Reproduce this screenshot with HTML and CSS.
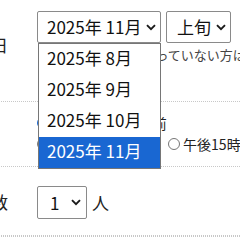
FILE: index.html
```html
<!DOCTYPE html>
<html lang="ja">
<head>
    <meta charset="UTF-8" />
    <meta name="viewport" content="width=device-width, initial-scale=1.0"/>
    <title>ご予約フォーム</title>
    <link rel="stylesheet" href="styles.css">
</head>
<body>
    <div class="form">
        <!-- 希望日 -->
        <div class="row row-date">
            <div class="label label-date">希望日</div>
            <div class="field">
                <div class="select-line">
                    <div class="select-wrap">
                        <div class="select select-month">
                            <span>2025年 11月</span>
                            <svg class="chev" width="10" height="7" viewBox="0 0 10 7"><path d="M1 1.2 L5 5.2 L9 1.2" fill="none" stroke="#1a1a1a" stroke-width="1.9"/></svg>
                        </div>
                        <ul class="dropdown">
                            <li>2025年 8月</li>
                            <li>2025年 9月</li>
                            <li>2025年 10月</li>
                            <li class="active">2025年 11月</li>
                        </ul>
                    </div>
                    <div class="select select-term">
                        <span>上旬</span>
                        <svg class="chev" width="10" height="7" viewBox="0 0 10 7"><path d="M1 1.2 L5 5.2 L9 1.2" fill="none" stroke="#1a1a1a" stroke-width="1.9"/></svg>
                    </div>
                </div>
                <p class="note">※来店日がまだ決まっていない方はお問い合わせください</p>
            </div>
        </div>

        <!-- 時間帯 -->
        <div class="row row-time">
            <div class="label"></div>
            <div class="field">
                <div class="radio-line">
                    <span class="radio checked"></span>
                    <span class="radio-text">ご指定時間より前</span>
                </div>
                <div class="radio-line">
                    <span class="radio"></span>
                    <span class="radio-text gap">午後13時〜15時</span>
                    <span class="radio"></span>
                    <span class="radio-text">午後15時〜17時</span>
                </div>
            </div>
        </div>

        <!-- 人数 -->
        <div class="row row-people">
            <div class="label label-people">人数</div>
            <div class="field field-inline">
                <div class="select select-count">
                    <span>1</span>
                    <svg class="chev" width="10" height="7" viewBox="0 0 10 7"><path d="M1 1.2 L5 5.2 L9 1.2" fill="none" stroke="#1a1a1a" stroke-width="1.9"/></svg>
                </div>
                <span class="unit">人</span>
            </div>
        </div>

        <div class="row"></div>
    </div>
</body>
</html>
```

FILE: styles.css
```css
body {
    margin: 0;
    font-family: "Noto Sans CJK JP", "Noto Sans", sans-serif;
    color: #222;
    background: #fff;
    overflow: hidden;
}

.form {
    margin-left: -60px;
    width: 320px;
}

.row {
    display: flex;
    border-bottom: 1px dotted #c8c8c8;
}

.label {
    flex: 0 0 97px;
    box-sizing: border-box;
    padding-right: 29px;
    text-align: right;
    font-size: 17px;
    line-height: 24px;
    white-space: nowrap;
}

.field {
    flex: 1;
}

/* 希望日 */
.row-date {
    height: 102px;
    box-sizing: border-box;
    padding-top: 11px;
}

.label-date {
    padding-top: 22px;
}

.select-line {
    display: flex;
    gap: 5px;
}

.select-wrap {
    position: relative;
}

.select {
    display: flex;
    align-items: center;
    justify-content: space-between;
    box-sizing: border-box;
    height: 32px;
    border: 1px solid #8a8a8a;
    border-radius: 2px;
    background: #fff;
    font-size: 17px;
    color: #111;
}

.select span {
    padding-bottom: 1px;
}

.select-month {
    width: 124px;
    padding: 0 4px 0 9px;
}

.select-term {
    width: 65px;
    padding: 0 4px 0 10px;
}

.dropdown {
    position: absolute;
    top: 32px;
    left: 1px;
    width: 123px;
    box-sizing: border-box;
    margin: 0;
    padding: 0;
    list-style: none;
    background: #fff;
    border: 1px solid #767676;
    z-index: 10;
}

.dropdown li {
    height: 31px;
    line-height: 27px;
    padding-left: 8px;
    font-size: 17px;
    color: #111;
}

.dropdown li.active {
    background: #1967d2;
    color: #fff;
}

.note {
    margin: 3px 0 0 2px;
    font-size: 13px;
    line-height: 18px;
    color: #444;
    white-space: nowrap;
}

/* 時間帯 */
.row-time {
    height: 65px;
    box-sizing: border-box;
    padding-top: 10px;
}

.radio-line {
    display: flex;
    align-items: center;
    height: 21px;
    font-size: 14px;
    white-space: nowrap;
}

.radio {
    flex: 0 0 auto;
    width: 12px;
    height: 12px;
    border: 1px solid #767676;
    border-radius: 50%;
    margin-right: 3px;
    box-sizing: border-box;
}

.radio.checked {
    border: 4px solid #1967d2;
    margin-right: 6px;
}

.radio-text.gap {
    margin-right: 15px;
}

/* 人数 */
.row-people {
    height: 69px;
    box-sizing: border-box;
    padding-top: 19px;
}

.label-people {
    padding-top: 4px;
}

.field-inline {
    display: flex;
    align-items: flex-start;
    gap: 5px;
}

.select-count {
    width: 50px;
    height: 33px;
    padding: 0 5px 0 12px;
}

.unit {
    font-size: 17px;
    line-height: 33px;
}
```
